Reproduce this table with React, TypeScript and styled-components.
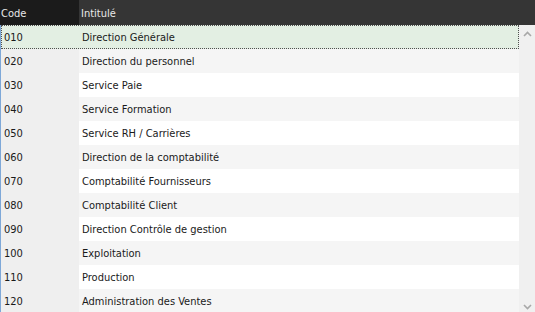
import React from "react";
import styled, { createGlobalStyle } from "styled-components";

const Global = createGlobalStyle`
  html, body { margin: 0; padding: 0; background: #ffffff; }
  body { width: 535px; height: 312px; overflow: hidden; font-family: "DejaVu Sans Condensed", "DejaVu Sans", Verdana, sans-serif; }
`;

const Frame = styled.div`
  width: 535px;
  height: 312px;
  display: flex;
  flex-direction: column;
  overflow: hidden;
`;

const Header = styled.div`
  display: grid;
  grid-template-columns: 79px 1fr;
  height: 25px;
  flex: none;
`;

const HeaderCell = styled.div<{ $dark?: boolean }>`
  background: ${(p) => (p.$dark ? "#1b1b1b" : "#353535")};
  color: #e8e8e8;
  font-size: 11px;
  display: flex;
  align-items: center;
  padding: 1px 0 0 ${(p) => (p.$dark ? "1px" : "2px")};
`;

const Body = styled.div`
  display: flex;
  flex: 1;
  min-height: 0;
  border-left: 1px solid #7ea8d8;
`;

const List = styled.div`
  flex: 1;
  display: flex;
  flex-direction: column;
`;

const Row = styled.div<{ $alt?: boolean; $selected?: boolean }>`
  display: grid;
  grid-template-columns: 78px 1fr;
  height: 24px;
  flex: none;
  box-sizing: border-box;
  background: ${(p) => (p.$selected ? "#e3efe3" : p.$alt ? "#f5f5f5" : "#ffffff")};
  ${(p) => (p.$selected ? "outline: 1px dotted #505050; outline-offset: -1px;" : "")}
`;

const CodeCell = styled.div<{ $selected?: boolean }>`
  background: ${(p) => (p.$selected ? "transparent" : "#efefef")};
  color: #1a1a1a;
  font-size: 11px;
  display: flex;
  align-items: center;
  padding: 1px 0 0 3px;
`;

const LabelCell = styled.div`
  color: #1a1a1a;
  font-size: 11px;
  display: flex;
  align-items: center;
  padding: 1px 0 0 3px;
  white-space: nowrap;
`;

const ScrollBar = styled.div`
  width: 16px;
  flex: none;
  background: #f0f0f0;
  display: flex;
  flex-direction: column;
  justify-content: space-between;
  align-items: center;
  padding: 6px 0 2px;
`;

const Arrow = styled.svg`
  width: 9px;
  height: 6px;
  display: block;
`;

const rows: [string, string][] = [
  ["010", "Direction Générale"],
  ["020", "Direction du personnel"],
  ["030", "Service Paie"],
  ["040", "Service Formation"],
  ["050", "Service RH / Carrières"],
  ["060", "Direction de la comptabilité"],
  ["070", "Comptabilité Fournisseurs"],
  ["080", "Comptabilité Client"],
  ["090", "Direction Contrôle de gestion"],
  ["100", "Exploitation"],
  ["110", "Production"],
  ["120", "Administration des Ventes"],
];

export default function App() {
  return (
    <Frame>
      <Global />
      <Header>
        <HeaderCell $dark>Code</HeaderCell>
        <HeaderCell>Intitulé</HeaderCell>
      </Header>
      <Body>
        <List>
          {rows.map(([code, label], i) => (
            <Row key={code} $selected={i === 0} $alt={i % 2 === 1}>
              <CodeCell $selected={i === 0}>{code}</CodeCell>
              <LabelCell>{label}</LabelCell>
            </Row>
          ))}
        </List>
        <ScrollBar>
          <Arrow viewBox="0 0 9 6">
            <path d="M1 5 L4.5 1.5 L8 5" fill="none" stroke="#a8a8a8" strokeWidth="1.6" />
          </Arrow>
          <Arrow viewBox="0 0 9 6">
            <path d="M1 1 L4.5 4.5 L8 1" fill="none" stroke="#a8a8a8" strokeWidth="1.6" />
          </Arrow>
        </ScrollBar>
      </Body>
    </Frame>
  );
}
